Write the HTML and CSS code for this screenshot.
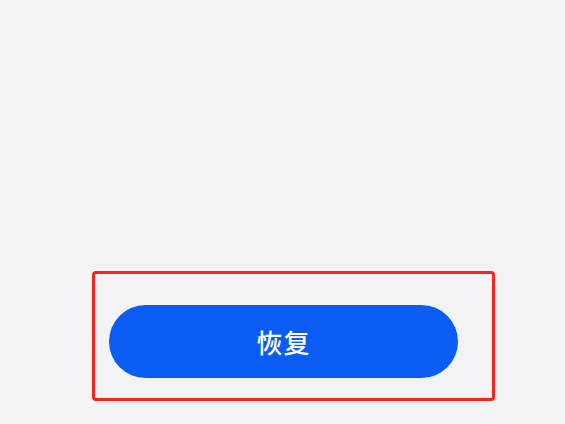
FILE: index.html
```html
<!DOCTYPE html>
<html lang="zh-CN">
<head>
<meta charset="utf-8">
<link rel="stylesheet" href="styles.css">
</head>
<body>
<main class="page">
  <section class="highlight">
    <button class="restore-btn" type="button">恢复</button>
  </section>
</main>
</body>
</html>
```
FILE: styles.css
```css
html, body {
  margin: 0;
  padding: 0;
}
body {
  background: #f3f3f5;
  width: 565px;
  height: 424px;
  overflow: hidden;
  font-family: "Noto Sans CJK SC", "Noto Sans", sans-serif;
}
.page {
  padding: 271px 0 0 92px;
}
.highlight {
  box-sizing: border-box;
  width: 403px;
  height: 130px;
  border: 3px solid #f5241c;
  border-radius: 4px;
  padding: 31px 34px 20px 14px;
  display: flex;
}
.restore-btn {
  width: 349px;
  height: 73px;
  border: none;
  border-radius: 37px;
  background: #0a5cf3;
  color: #ffffff;
  font-family: "Noto Sans CJK SC", "Noto Sans", sans-serif;
  font-size: 26px;
  font-weight: 500;
  letter-spacing: 1px;
  padding: 0;
  display: flex;
  align-items: center;
  justify-content: center;
}
```
